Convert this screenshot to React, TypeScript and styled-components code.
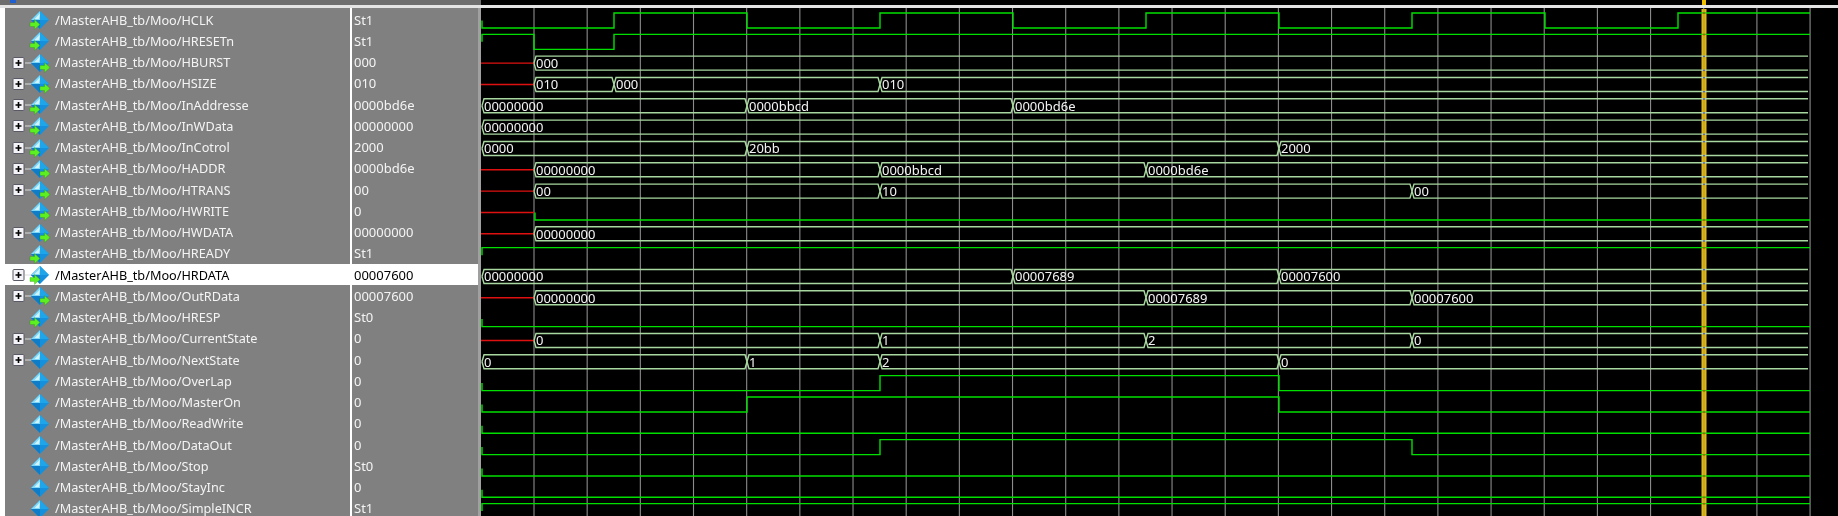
import React from 'react';
import styled, {createGlobalStyle} from 'styled-components';

const GlobalStyle = createGlobalStyle`
	html, body {
		margin: 0;
		background: #000;
		overflow: hidden;
	}
`;

const ROW = 21.25;
const WAVE_ROW = 21.33;
const FIRST = 8;
const GRID_START = 534;
const GRID_STEP = 53.17;
const WAVE_LEFT = 481;
const WAVE_END = 1810;
const CURSOR = 1704;

type Arrow = 'in' | 'out' | 'none';
type Seg = [number, string];

interface Signal {
	name: string;
	value: string;
	arrow: Arrow;
	bus?: boolean;
	selected?: boolean;
	segs?: Seg[];
	red?: boolean;
	logic?: [number, 0 | 1][];
}

const signals: Signal[] = [
	{name: 'HCLK', value: 'St1', arrow: 'in', logic: [[481, 0], [614, 1], [747, 0], [880, 1], [1013, 0], [1146, 1], [1279, 0], [1412, 1], [1545, 0], [1678, 1]]},
	{name: 'HRESETn', value: 'St1', arrow: 'in', logic: [[481, 1], [534, 0], [614, 1]]},
	{name: 'HBURST', value: '000', arrow: 'out', bus: true, red: true, segs: [[534, '000']]},
	{name: 'HSIZE', value: '010', arrow: 'out', bus: true, red: true, segs: [[534, '010'], [614, '000'], [880, '010']]},
	{name: 'InAddresse', value: '0000bd6e', arrow: 'in', bus: true, segs: [[482, '00000000'], [747, '0000bbcd'], [1013, '0000bd6e']]},
	{name: 'InWData', value: '00000000', arrow: 'in', bus: true, segs: [[482, '00000000']]},
	{name: 'InCotrol', value: '2000', arrow: 'in', bus: true, segs: [[482, '0000'], [747, '20bb'], [1279, '2000']]},
	{name: 'HADDR', value: '0000bd6e', arrow: 'out', bus: true, red: true, segs: [[534, '00000000'], [880, '0000bbcd'], [1146, '0000bd6e']]},
	{name: 'HTRANS', value: '00', arrow: 'out', bus: true, red: true, segs: [[534, '00'], [880, '10'], [1412, '00']]},
	{name: 'HWRITE', value: '0', arrow: 'out', red: true, logic: [[534, 0]]},
	{name: 'HWDATA', value: '00000000', arrow: 'out', bus: true, red: true, segs: [[534, '00000000']]},
	{name: 'HREADY', value: 'St1', arrow: 'in', logic: [[481, 1]]},
	{name: 'HRDATA', value: '00007600', arrow: 'in', bus: true, selected: true, segs: [[482, '00000000'], [1013, '00007689'], [1279, '00007600']]},
	{name: 'OutRData', value: '00007600', arrow: 'out', bus: true, red: true, segs: [[534, '00000000'], [1146, '00007689'], [1412, '00007600']]},
	{name: 'HRESP', value: 'St0', arrow: 'in', logic: [[481, 0]]},
	{name: 'CurrentState', value: '0', arrow: 'none', bus: true, red: true, segs: [[534, '0'], [880, '1'], [1146, '2'], [1412, '0']]},
	{name: 'NextState', value: '0', arrow: 'none', bus: true, segs: [[482, '0'], [747, '1'], [880, '2'], [1279, '0']]},
	{name: 'OverLap', value: '0', arrow: 'none', logic: [[481, 0], [880, 1], [1279, 0]]},
	{name: 'MasterOn', value: '0', arrow: 'none', logic: [[481, 0], [747, 1], [1279, 0]]},
	{name: 'ReadWrite', value: '0', arrow: 'none', logic: [[481, 0]]},
	{name: 'DataOut', value: '0', arrow: 'none', logic: [[481, 0], [880, 1], [1412, 0]]},
	{name: 'Stop', value: 'St0', arrow: 'none', logic: [[481, 0]]},
	{name: 'StayInc', value: '0', arrow: 'none', logic: [[481, 0]]},
	{name: 'SimpleINCR', value: 'St1', arrow: 'none', logic: [[481, 1]]},
];

const Window = styled.div`
	display: flex;
	width: 1838px;
	height: 516px;
	overflow: hidden;
	background: #000;
	font-family: "Noto Sans", "Liberation Sans", sans-serif;
	filter: blur(0.25px);
`;

const Panes = styled.div`
	display: flex;
	flex-direction: column;
	width: 481px;
	flex-shrink: 0;
`;

const TopBar = styled.div`
	position: relative;
	flex-shrink: 0;
	height: 5px;
	background: #6e6e6e;
	border-bottom: 3px solid #e4e4e4;
`;

const TopMark = styled.span`
	position: absolute;
	left: 10px;
	top: 0;
	width: 6px;
	height: 3px;
	background: #1f5fd0;
`;

const Table = styled.div`
	flex: 1;
	min-height: 0;
	overflow: hidden;
	display: flex;
	flex-direction: column;
	padding-top: 1px;
	background: linear-gradient(to right, #fff 5px, #808080 5px, #808080 350px, #fff 350px, #fff 352px, #808080 352px, #808080 478px, #a0a0a0 478px);
`;

const Row = styled.div`
	display: flex;
	flex-shrink: 0;
	height: ${ROW}px;
	padding-left: 5px;
	background: linear-gradient(to right, #fff 478px, #a0a0a0 478px);
`;

const NameCell = styled.div<{$selected?: boolean}>`
	display: flex;
	align-items: center;
	gap: 3px;
	width: 345px;
	padding-left: 7px;
	box-sizing: border-box;
	background: ${p => (p.$selected ? '#fff' : '#808080')};
	color: ${p => (p.$selected ? '#000' : '#f4f4f4')};
	font-size: 12.7px;
	white-space: nowrap;
`;

const ValueCell = styled.div<{$selected?: boolean}>`
	display: flex;
	align-items: center;
	width: 126px;
	margin-left: 2px;
	padding-left: 2px;
	box-sizing: border-box;
	background: ${p => (p.$selected ? '#fff' : '#808080')};
	color: ${p => (p.$selected ? '#000' : '#f4f4f4')};
	font-size: 13px;
`;

const Icon = styled.svg`
	flex-shrink: 0;
	width: 40px;
	height: 21px;
`;

const Wave = styled.svg`
	display: block;
	flex-shrink: 0;
	width: 1357px;
	height: 516px;
`;

const WaveLabel = styled.text`
	font-family: "Noto Sans", "Liberation Sans", sans-serif;
	font-size: 13px;
	fill: #f4f4f4;
`;

const SignalIcon = ({arrow, bus}: {arrow: Arrow; bus?: boolean}) => (
	<Icon viewBox="0 0 40 21">
		{bus && (
			<g>
				<line x1="13" y1="11" x2="20" y2="11" stroke="#dcdcdc" strokeWidth="1"/>
				<rect x="1" y="5.5" width="11" height="11" rx="1" fill="#f4f4f8" stroke="#5a5a66" strokeWidth="1"/>
				<path d="M3.5 11h6M6.5 8v6" stroke="#000" strokeWidth="1.6"/>
			</g>
		)}
		<path d="M28 2 L37 11 L28 20 L19 11 Z" fill="#1590dc"/>
		<path d="M28 2 L19 11 L28 11 Z" fill="#7fd8f8"/>
		<path d="M28 2 L37 11 L28 11 Z" fill="#1fa6ea"/>
		<path d="M28 4.5 L22.5 10 L27 10 Z" fill="#d4f4fd"/>
		<path d="M19 11 L28 20 L28 11 Z" fill="#0f7cc8"/>
		{arrow === 'in' && <path d="M18 13.5h4.5V10.5l5.5 5-5.5 5v-3H18z" fill="#5cf020" stroke="#2a8a12" strokeWidth="0.3"/>}
		{arrow === 'out' && <path d="M28 13.5h4.5V10.5l5.5 5-5.5 5v-3H28z" fill="#5cf020" stroke="#2a8a12" strokeWidth="0.3"/>}
	</Icon>
);

const X = (v: number) => v - WAVE_LEFT;
const highY = (i: number) => FIRST + 5 + WAVE_ROW * i;
const lowY = (i: number) => FIRST + 20 + WAVE_ROW * i;
const midY = (i: number) => FIRST + 12.5 + WAVE_ROW * i;

const logicPath = (s: Signal, i: number) => {
	const steps = s.logic || [];
	let d = '';
	steps.forEach(([x, lvl], n) => {
		const y = lvl ? highY(i) : lowY(i);
		d += n === 0 ? `M${X(x) + 1} ${midY(i)}V${y}` : `V${y}`;
		const next = n + 1 < steps.length ? steps[n + 1][0] : WAVE_END;
		d += `H${X(next)}`;
	});
	return d;
};

const BusTrack = ({s, i}: {s: Signal; i: number}) => {
	const segs = s.segs || [];
	const top = highY(i) + 0.5;
	const bottom = lowY(i) - 0.5;
	const mid = midY(i);
	return (
		<g>
			{segs.map(([x, label], n) => {
				const last = n + 1 >= segs.length;
				const end = last ? WAVE_END : segs[n + 1][0];
				const tail = last ? '' : `L${X(end)} ${mid}`;
				return (
					<g key={n}>
						<path
							d={`M${X(x)} ${mid}L${X(x) + 2} ${top}H${X(end) - 2}${tail}M${X(x)} ${mid}L${X(x) + 2} ${bottom}H${X(end) - 2}${tail}`}
							fill="none"
							stroke="#a8d8a0"
							strokeWidth="1.4"
						/>
						<WaveLabel x={X(x) + 2} y={top + 12}>{label}</WaveLabel>
					</g>
				);
			})}
		</g>
	);
};

// small marks where a trace crosses the cursor
const CursorDots = ({s, i}: {s: Signal; i: number}) => {
	const cx = X(CURSOR) - 1;
	if (s.bus) {
		return (
			<g fill="#6a60c0">
				<rect x={cx} y={highY(i)} width="2" height="1.5"/>
				<rect x={cx} y={lowY(i) - 1} width="2" height="1.5"/>
			</g>
		);
	}
	const steps = s.logic || [];
	const lvl = steps[steps.length - 1][1];
	return <rect x={cx} y={(lvl ? highY(i) : lowY(i)) - 0.5} width="2" height="1.5" fill="#e04010"/>;
};

export default function App() {
	const grid = Array.from({length: 26}, (_, n) => GRID_START + GRID_STEP * n).filter(x => x <= WAVE_END + 1);
	return (
		<Window>
			<GlobalStyle/>
			<Panes>
				<TopBar><TopMark/></TopBar>
				<Table>
					{signals.map(s => (
						<Row key={s.name}>
							<NameCell $selected={s.selected}>
								<SignalIcon arrow={s.arrow} bus={s.bus}/>
								/MasterAHB_tb/Moo/{s.name}
							</NameCell>
							<ValueCell $selected={s.selected}>{s.value}</ValueCell>
						</Row>
					))}
				</Table>
			</Panes>
			<Wave viewBox="0 0 1357 516">
				<rect x="0" y="5" width="1357" height="3" fill="#e4e4e4"/>
				{grid.map(x => (
					<line key={x} x1={X(x)} y1="8" x2={X(x)} y2="516" stroke="#8c8c8c" strokeWidth="1.1"/>
				))}
				<rect x={X(CURSOR) - 2} y="0" width="4" height="5" fill="#f0c000"/>
				<rect x={X(CURSOR) - 2.5} y="9" width="5" height="507" fill="#e8b800"/>
				<rect x={X(CURSOR) - 1} y="9" width="2" height="507" fill="#c0aa40"/>
				{signals.map((s, i) => (
					<g key={s.name}>
						{s.red && <line x1="0" y1={midY(i)} x2={X(534)} y2={midY(i)} stroke="#e01010" strokeWidth="1.4"/>}
						{s.bus
							? <BusTrack s={s} i={i}/>
							: <path d={logicPath(s, i)} fill="none" stroke="#00e000" strokeWidth="1.4"/>}
						<CursorDots s={s} i={i}/>
					</g>
				))}
			</Wave>
		</Window>
	);
}
